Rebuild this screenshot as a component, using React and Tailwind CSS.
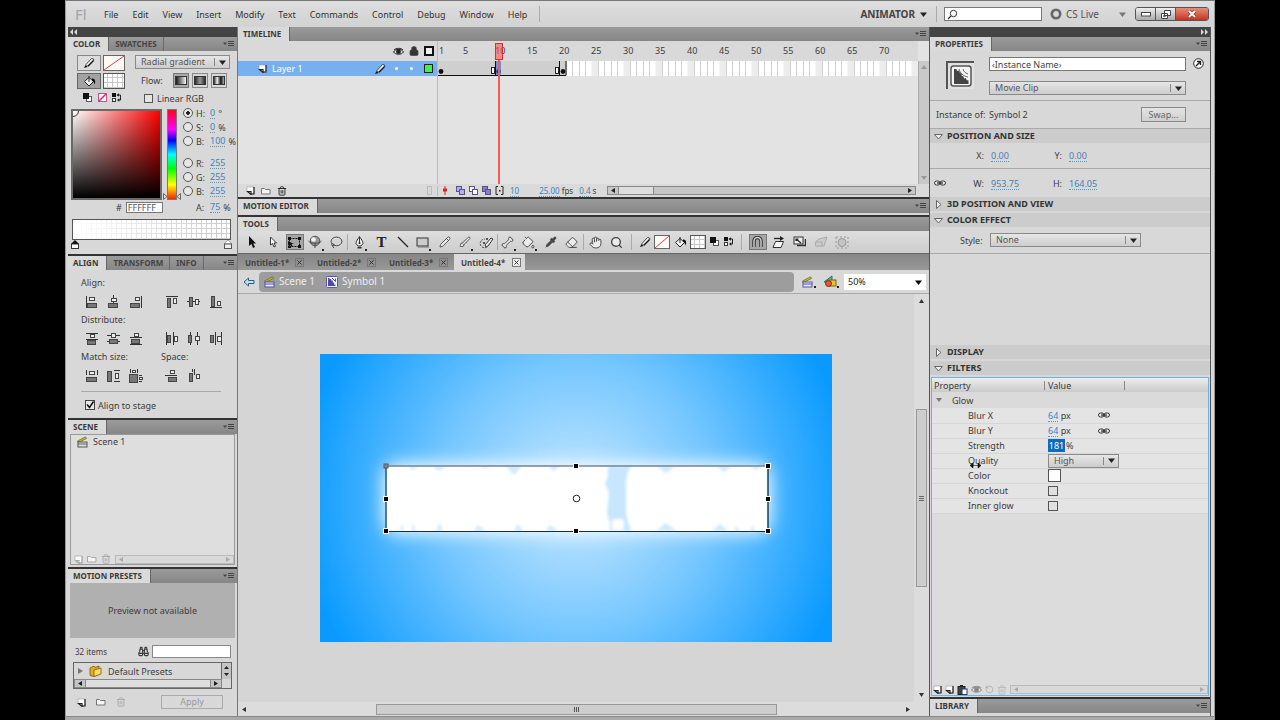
import React from "react";
import { Eraser, Pipette, Bone, Hand, Search, Lasso, PaintBucket, Brush, Pencil, Lock, Trash2, Binoculars, RotateCcw } from "lucide-react";

/* ---------- small drawings ---------- */

function Svg({ w = 14, h = 14, children, className = "" }) {
  return (
    <svg width={w} height={h} viewBox={`0 0 ${w} ${h}`} className={`block shrink-0 ${className}`} fill="none" aria-hidden="true">
      {children}
    </svg>
  );
}

const Down = ({ className = "text-[#222]" }) => (
  <Svg w={7} h={5} className={className}><path d="M0 0.5h7L3.5 5z" fill="currentColor" /></Svg>
);
const MenuGlyph = () => (
  <Svg w={12} h={8}>
    <path d="M0 2.500h4L2 5z" fill="#444" />
    <path d="M5 1.500h6M5 3.500h6M5 5.500h6" stroke="#444" />
  </Svg>
);
const Chevrons = ({ right }) => (
  <Svg w={7} h={6}>
    {right
      ? <path d="M0 0l3 3-3 3zM4 0l3 3-3 3z" fill="#ddd" />
      : <path d="M3 0L0 3l3 3zM7 0L4 3l3 3z" fill="#ddd" />}
  </Svg>
);
const EyeFilled = ({ c = "#222" }) => (
  <Svg w={11} h={9}>
    <path d="M.5 5C2.500 1.500 8.500 1.500 10.500 5 8.500 8 2.500 8 .5 5z" fill="#ddd" stroke={c} />
    <circle cx="5.500" cy="4.700" r="2.400" fill={c} />
    <path d="M1 3C3 .8 8 .8 10 3" stroke={c} />
  </Svg>
);
const Pen = () => (
  <Svg w={12} h={12}>
    <path d="M1 11l1.500-3 2 2z" fill="#111" />
    <path d="M3 7.500L8.500 1.500l2 .5.2 1.500L5 9.500z" fill="#f6f6f6" stroke="#333" strokeWidth=".9" />
    <path d="M5 9L10.500 3.500" stroke="#111" strokeWidth="1.300" />
  </Svg>
);
const Bucket = () => (
  <Svg w={13} h={12}>
    <path d="M1.500 6.500L6 2.500l4.500 4-4.500 4.500z" fill="#f4f4f4" stroke="#222" />
    <path d="M6 7V1" stroke="#222" />
    <path d="M9 3.500c3 0 3.500 2 3 6-1-1-1-3-3-4z" fill="#111" />
  </Svg>
);
const BlackWhite = () => (
  <Svg w={10} h={10}><rect x="3.500" y="3.500" width="5" height="5" fill="#fff" stroke="#555" /><rect x="0" y="0" width="6" height="6" fill="#111" /></Svg>
);
const NoColor = () => (
  <Svg w={9} h={9}><rect x=".5" y=".5" width="8" height="8" fill="#fff" stroke="#c2538c" /><path d="M1 8L8 1" stroke="#d2246e" strokeWidth="1.500" /></Svg>
);
const SwapColors = () => (
  <Svg w={11} h={10}>
    <rect width="4" height="4" fill="#111" /><rect x=".5" y="5.500" width="3" height="3" fill="#fff" stroke="#333" />
    <path d="M5 2h3.500v5H6" stroke="#222" /><path d="M7 .3L4.500 2 7 3.800zM7.300 5.300L5 7l2.300 1.700z" fill="#222" />
  </Svg>
);
const Clapper = ({ light }) => (
  <Svg w={13} h={12}>
    <path d="M1.500 5L9.500 .8l1 1.800-8.500 4z" fill="#c8b828" stroke="#6a6420" strokeWidth=".7" />
    <rect x="2" y="6" width="9" height="5" fill={light ? "#e6e6ff" : "#ddd"} stroke={light ? "#5654a8" : "#555"} />
    <path d="M2 8h9" stroke={light ? "#5654a8" : "#666"} />
  </Svg>
);
const SymbolGlyph = () => (
  <Svg w={12} h={12}>
    <rect x=".5" y=".5" width="11" height="11" rx="1" fill="#f4f4ff" stroke="#5a58b4" />
    <path d="M2 2h1.500v1.300l1.500-.3.5 1.500 1.500.3-.3 1.500 1.500.7L8 8.500l1.500.3V10H2z" fill="#4d4bb0" />
    <path d="M6 2l3.500 3.500M9.500 2.500v3" stroke="#4d4bb0" />
  </Svg>
);
const PageNew = ({ c = "#222" }) => (
  <Svg w={9} h={9}><path d="M1 1h7v7H5L1 5z" fill="#fff" stroke="#999" strokeWidth=".6" /><path d="M8 1v7H4M1.500 5.500H5V8.500z" stroke={c} strokeWidth="1.200" /></Svg>
);
const FolderSmall = ({ c = "#777" }) => (
  <Svg w={10} h={8}><path d="M.5 7V1.500h3l1 1H9V7z" fill="#f4f4f4" stroke={c} /></Svg>
);
const Chain = () => (
  <Svg w={12} h={6}>
    <rect x=".5" y="1" width="5.500" height="4" rx="2" fill="#eee" stroke="#333" />
    <rect x="6" y="1" width="5.500" height="4" rx="2" fill="#eee" stroke="#333" />
    <path d="M3 3h6" stroke="#222" strokeWidth="1.200" />
  </Svg>
);
const Trash = ({ c }) => <Trash2 size={10} color={c} strokeWidth={2.2} />;

const GridSwatch = ({ w, h, id, fade }) => (
  <svg width={fade ? "100%" : w} height={h} className="block" aria-hidden="true">
    <defs>
      <pattern id={id} width="5" height="5" patternUnits="userSpaceOnUse"><path d="M4.500 0V5M0 4.500H5" stroke="#c8c8c8" fill="none" /></pattern>
      <linearGradient id={id + "f"}><stop offset="0" stopColor="#fff" /><stop offset=".9" stopColor="#fff" stopOpacity=".1" /></linearGradient>
    </defs>
    <rect width="100%" height="100%" fill="#fff" /><rect width="100%" height="100%" fill={`url(#${id})`} />
    {fade && <rect width="100%" height="100%" fill={`url(#${id}f)`} />}
    <rect width="100%" height="100%" fill="none" stroke="#555" strokeWidth="2" />
  </svg>
);
const StrokeSwatch = ({ w, h }) => (
  <Svg w={w} h={h}><rect x=".5" y=".5" width={w - 1} height={h - 1} fill="#fdfaf6" stroke="#666" /><path d={`M1 ${h - 1}L${w - 1} 1`} stroke="#d8405a" /></Svg>
);

/* ---------- shared controls ---------- */

const hot = "text-[#3f83bb] border-b border-dotted border-[#5c96c6] leading-[10px]";
const Hot = ({ children, label }) => <button aria-label={label} className={hot}>{children}</button>;

function PanelTabs({ tabs, menu = true }) {
  return (
    <div className="flex h-[14px] shrink-0 items-stretch bg-linear-to-b from-[#9b9b9b] to-[#868686]">
      {tabs.map((t, i) => (
        <button key={t} className={i === 0
          ? "border-r border-[#666] bg-[#dadada] pr-[8px] pl-[5px] text-[8px] leading-[12px] font-bold text-[#3a3a3a]"
          : "border-r border-[#6a6a6a] px-[6px] text-[8px] leading-[12px] font-bold text-[#444]"}>{t}</button>
      ))}
      <span className="flex-1" />
      {menu && <button aria-label="Panel menu" className="pr-[2px]"><MenuGlyph /></button>}
    </div>
  );
}

function Select({ label, value, className = "" }) {
  return (
    <span className={`relative block ${className}`}>
      <select aria-label={label} defaultValue={value} className="block h-[14px] w-full appearance-none border border-[#8a8a8a] bg-linear-to-b from-[#e6e6e6] to-[#cdcdcd] pl-[5px] text-[9px] leading-[12px] text-[#555]">
        <option>{value}</option>
      </select>
      <span className="pointer-events-none absolute inset-y-[3px] right-[4px] flex items-center border-l border-[#888] pl-1"><Down /></span>
    </span>
  );
}

function HScroll({ thumb, faint }) {
  const c = faint ? "#aaa" : "#222";
  return (
    <div className={faint ? "flex h-[9px] min-w-0 flex-1 items-stretch border border-[#bbb] bg-[#d9d9d9]" : "flex h-[9px] min-w-0 flex-1 items-stretch border border-[#888] bg-[#c6c6c6]"}>
      <button aria-label="Scroll left" className="flex w-[10px] items-center justify-center"><Svg w={4} h={5}><path d="M4 0v5L0 2.500z" fill={c} /></Svg></button>
      {thumb && <span className={`border-x border-[#888] bg-[#dedede] ${thumb}`} />}
      <span className="flex-1" />
      <button aria-label="Scroll right" className="flex w-[10px] items-center justify-center"><Svg w={4} h={5}><path d="M0 0v5l4-2.500z" fill={c} /></Svg></button>
    </div>
  );
}

/* ---------- menu bar ---------- */

function MenuBar() {
  return (
    <header className="flex h-[27px] shrink-0 items-center border-t border-[#777] bg-linear-to-b from-[#dedede] to-[#d2d2d2] text-[10px] text-[#333]">
      <span className="w-[38px] pl-[9px] text-[15px] leading-none text-[#a4a4a4]">Fl</span>
      <nav className="flex gap-[14px] text-[9px] whitespace-nowrap">
        {["File", "Edit", "View", "Insert", "Modify", "Text", "Commands", "Control", "Debug", "Window", "Help"].map((m) => <button key={m}>{m}</button>)}
      </nav>
      <span className="ml-3 h-4 w-px bg-[#aaa]" />
      <span className="flex-1" />
      <button className="flex items-center gap-[5px] font-bold text-[#444]">ANIMATOR <Down /></button>
      <span className="mr-[7px] ml-[9px] h-4 w-px bg-[#aaa]" />
      <label className="flex h-[14px] w-[98px] items-center border border-[#777] bg-white px-[2px]">
        <Svg w={11} h={11}><circle cx="6.500" cy="4.500" r="3.200" stroke="#333" /><path d="M4 7L1 10" stroke="#333" strokeWidth="1.300" /></Svg>
        <input aria-label="Search" className="w-full min-w-0 outline-none" />
      </label>
      <button className="ml-2 flex items-center gap-1 text-[#555]">
        <Svg w={12} h={12}><circle cx="6" cy="6" r="4.200" stroke="#666" strokeWidth="2.600" /></Svg>CS Live
        <span className="ml-4"><Down className="text-[#777]" /></span>
      </button>
      <div className="mr-[5px] ml-[9px] flex h-[14px] overflow-hidden rounded-[3px] border border-[#555]">
        <button aria-label="Minimize" className="flex w-5 items-center justify-center border-r border-[#555] bg-linear-to-b from-[#eee] to-[#aaa]"><Svg w={10} h={5}><rect x=".5" y=".5" width="9" height="3.500" fill="#fff" stroke="#444" /></Svg></button>
        <button aria-label="Restore" className="flex w-5 items-center justify-center border-r border-[#555] bg-linear-to-b from-[#eee] to-[#aaa]"><Svg w={10} h={9}><path d="M3.500.5h6v5h-6zM.5 3.500h6v5h-6z" fill="#fff" stroke="#444" /><path d="M2.500 5.500h2v1h-2z" stroke="#444" strokeWidth=".8" /></Svg></button>
        <button aria-label="Close" className="flex w-8 items-center justify-center bg-linear-to-b from-[#e58a78] to-[#c5311c]"><Svg w={10} h={8}><path d="M2 1l6 6M8 1L2 7" stroke="#733" strokeWidth="3.200" /><path d="M2 1l6 6M8 1L2 7" stroke="#fff" strokeWidth="2" /></Svg></button>
      </div>
    </header>
  );
}

/* ---------- left column ---------- */

function Radio({ name, value, unit, checked }) {
  return (
    <div className="flex h-[14px] items-center">
      {checked !== undefined
        ? <input type="radio" name="channel" id={name} defaultChecked={checked} className="size-[10px] appearance-none rounded-full border border-[#555] bg-[#e6e6e6] checked:bg-[radial-gradient(circle,#222_0_2px,#e6e6e6_2px)]" />
        : <span className="w-[10px]" />}
      <label htmlFor={checked !== undefined ? name : undefined} className="w-[17px] pl-[3px]">{name[0]}:</label>
      <Hot label={name}>{value}</Hot>
      <span className="pl-[3px]">{unit}</span>
    </div>
  );
}

const flowIcons = [["#111", "#fff"], ["#222", "#999", "#222"], ["#111", "#eee", "#111", "#ccc"]];

function ColorPanel() {
  return (
    <section className="h-[217px] shrink-0">
      <PanelTabs tabs={["COLOR", "SWATCHES"]} />
      <div className="flex flex-col pt-[4px] pl-[3px]">
        <div className="flex pl-[6px]">
          <div className="flex w-[58px] flex-col gap-[2px]">
            <div className="flex gap-[2px]">
              <button aria-label="Stroke color" className="flex h-[16px] w-6 items-center justify-center border border-[#888] bg-[#dcdcdc]"><Pen /></button>
              <StrokeSwatch w={22} h={16} />
            </div>
            <div className="flex gap-[2px]">
              <button aria-label="Fill color" className="flex h-[16px] w-6 items-center justify-center border border-[#666] bg-[#a2a2a2]"><Bucket /></button>
              <GridSwatch w={22} h={16} id="fill-grid" />
            </div>
            <div className="flex gap-[5px] pt-[2px] pl-[6px]"><BlackWhite /><NoColor /><SwapColors /></div>
          </div>
          <div className="flex flex-1 flex-col gap-[4px]">
            <Select label="Color type" value="Radial gradient" className="w-[95px]" />
            <div className="flex h-[14px] items-center gap-[3px] pl-[6px]"><span className="w-[29px]">Flow:</span>
              {flowIcons.map((cs, i) => (
                <button key={i} aria-label={`Flow ${i + 1}`} className={i ? "border border-[#888] px-px py-[2px]" : "border border-[#777] bg-[#aaa] px-px py-[2px]"}>
                  <Svg w={12} h={9}><defs><linearGradient id={`flow${i}`}>{cs.map((c, j) => <stop key={j} offset={j / (cs.length - 1)} stopColor={c} />)}</linearGradient></defs><rect x=".5" y=".5" width="11" height="8" fill={`url(#flow${i})`} stroke="#333" /></Svg>
                </button>
              ))}
            </div>
            <label className="flex h-[14px] items-center gap-[4px] pl-[9px]"><input type="checkbox" className="size-[9px] appearance-none border border-[#555] bg-[#e4e4e4]" />Linear RGB</label>
          </div>
        </div>
        <div className="mt-[4px] flex">
          <div className="h-[91px] w-[91px] border-2 border-[#6d6868] bg-[linear-gradient(to_top,#000,transparent),linear-gradient(to_right,#fff,#f00)]">
            <Svg w={6} h={6}><path d="M0 5.500A5.500 5.500 0 0 0 5.500 0" stroke="#333" /></Svg>
          </div>
          <div className="flex items-end pl-px"><Svg w={4} h={7}><path d="M.5 .5v6L4 3.500z" fill="#ddd" stroke="#666" /></Svg></div>
          <div className="h-[91px] w-[10px] border border-[#777] bg-[linear-gradient(to_bottom,#f02,#f0f_22%,#00f_34%,#0ff_50%,#0f0_66%,#ff0_84%,#f20)]" />
          <div className="flex w-[6px] items-end"><Svg w={4} h={7}><path d="M3.500 .5v6L0 3.500z" fill="#ddd" stroke="#666" /></Svg></div>
          <div className="-mt-[3px] flex flex-col">
            <Radio name="H" value="0" unit="°" checked={true} />
            <Radio name="S" value="0" unit="%" checked={false} />
            <Radio name="Brightness" value="100" unit="%" checked={false} />
            <span className="h-[8px]" />
            <Radio name="R" value="255" checked={false} />
            <Radio name="G" value="255" checked={false} />
            <Radio name="Blue" value="255" checked={false} />
          </div>
        </div>
        <div className="flex h-[14px] items-center">
          <label className="flex w-[112px] items-center gap-1 pl-[45px]">#<input defaultValue="FFFFFF" className="h-[11px] w-[37px] border border-[#777] bg-white px-px text-[9px] leading-[9px] text-[#555]" /></label>
          <Radio name="A" value="75" unit="%" />
        </div>
        <div className="mt-[5px] mr-[6px] ml-px"><GridSwatch h={21} id="ramp" fade /></div>
        <div className="mr-[5px] flex justify-between">
          <Svg w={8} h={9}><path d="M0 4L4 0l4 4z" fill="#000" /><rect x=".5" y="4" width="7" height="4.500" fill="#fff" stroke="#333" /></Svg>
          <Svg w={8} h={9}><path d="M0 4L4 0l4 4z" fill="#fff" stroke="#777" strokeWidth=".6" /><rect x=".5" y="4" width="7" height="4.500" fill="#eee" stroke="#555" /></Svg>
        </div>
      </div>
    </section>
  );
}

/* each part: x, y, w, h, kind (f filled, o outlined, l line) */
const A = {
  left: [[1, 1, 1, 12, "l"], [4, 2, 5, 3, "o"], [3, 8, 9, 4, "f"]],
  hc: [[6, 0, 1, 13, "l"], [4, 3, 5, 3, "o"], [2, 8, 9, 4, "f"]],
  right: [[12, 1, 1, 12, "l"], [6, 2, 4, 3, "o"], [2, 8, 9, 4, "f"]],
  top: [[1, 1, 12, 1, "l"], [3, 3, 3, 9, "f"], [8, 3, 3, 5, "o"]],
  vc: [[0, 6, 13, 1, "l"], [3, 2, 3, 9, "f"], [8, 4, 3, 5, "o"]],
  bottom: [[1, 12, 12, 1, "l"], [3, 1, 3, 10, "f"], [8, 6, 3, 4, "o"]],
  dTop: [[1, 1, 12, 1, "l"], [5, 2, 4, 3, "o"], [1, 7, 12, 1, "l"], [3, 8, 8, 4, "f"]],
  dMid: [[0, 3, 13, 1, "l"], [4, 1, 4, 4, "o"], [0, 9, 13, 1, "l"], [3, 7, 8, 4, "f"]],
  dBot: [[1, 5, 12, 1, "l"], [5, 1, 4, 3, "o"], [1, 12, 12, 1, "l"], [3, 7, 8, 4, "f"]],
  dLeft: [[1, 0, 1, 13, "l"], [3, 3, 3, 7, "f"], [8, 0, 1, 13, "l"], [9, 4, 3, 5, "o"]],
  dCen: [[3, 0, 1, 13, "l"], [2, 3, 3, 7, "f"], [10, 0, 1, 13, "l"], [8, 4, 4, 4, "o"]],
  dRight: [[6, 0, 1, 13, "l"], [2, 3, 3, 7, "f"], [12, 0, 1, 13, "l"], [8, 4, 4, 5, "o"]],
  mW: [[1, 1, 1, 5, "l"], [12, 1, 1, 5, "l"], [4, 2, 5, 3, "o"], [2, 8, 10, 4, "f"]],
  mH: [[1, 2, 4, 10, "f"], [7, 1, 6, 1, "l"], [7, 12, 6, 1, "l"], [8, 4, 3, 5, "o"]],
  mB: [[1, 0, 1, 4, "l"], [3, 1, 3, 2, "o"], [8, 0, 1, 4, "l"], [1, 5, 8, 8, "f"], [10, 6, 3, 1, "l"], [10, 8, 3, 2, "o"], [10, 12, 3, 1, "l"]],
  sV: [[5, 1, 4, 3, "o"], [0, 6, 3, 1, "l"], [3, 6, 9, 1, "l"], [4, 8, 8, 4, "f"]],
  sH: [[3, 4, 3, 8, "f"], [7, 0, 1, 6, "l"], [5, 0, 1, 3, "l"], [9, 5, 3, 4, "o"]],
};
const AlignBtn = ({ k, label }) => (
  <button aria-label={label} className="flex w-[22px] items-center justify-center">
    <Svg w={14} h={14}>
      {A[k].map(([x, y, w, h, t], i) => t === "o"
        ? <rect key={i} x={x + 0.5} y={y + 0.5} width={w} height={h} fill="#eee" stroke="#444" />
        : t === "f" ? <rect key={i} x={x - 0.5} y={y + 0.5} width={w} height={h} fill="#777" stroke="#444" />
          : <rect key={i} x={x} y={y} width={w} height={h} fill="#333" />)}
    </Svg>
  </button>
);

function AlignPanel() {
  const line = (a, b) => (
    <div className="flex h-[19px] items-stretch">
      {a.map((k) => <AlignBtn key={k} k={k} label={k} />)}
      <span className="w-[14px]" />
      {b.map((k) => <AlignBtn key={k} k={k} label={k} />)}
    </div>
  );
  return (
    <section className="h-[162px] shrink-0">
      <PanelTabs tabs={["ALIGN", "TRANSFORM", "INFO"]} />
      <div className="flex flex-col pt-1 pl-[13px]">
        <div className="h-[18px] leading-[18px]">Align:</div>
        {line(["left", "hc", "right"], ["top", "vc", "bottom"])}
        <div className="h-[18px] leading-[18px]">Distribute:</div>
        {line(["dTop", "dMid", "dBot"], ["dLeft", "dCen", "dRight"])}
        <div className="flex h-[18px] leading-[18px]"><span className="w-[80px]">Match size:</span><span>Space:</span></div>
        {line(["mW", "mH", "mB"], ["sV", "sH"])}
        <hr className="mt-[6px] mr-4 border-[#aaa]" />
        <label className="mt-[6px] flex h-[14px] items-center gap-[3px] pl-1">
          <span className="relative block size-[10px]">
            <input type="checkbox" defaultChecked className="block size-[10px] appearance-none border border-[#444] bg-[#e8e8e8]" />
            <Svg w={10} h={10} className="pointer-events-none absolute inset-0"><path d="M2 4.500l2.500 3L8.500 1.500" stroke="#111" strokeWidth="1.500" /></Svg>
          </span>
          Align to stage
        </label>
      </div>
    </section>
  );
}

function ScenePanel() {
  return (
    <section className="flex min-h-[145px] flex-1 flex-col">
      <PanelTabs tabs={["SCENE"]} />
      <div className="mx-[2px] mb-[2px] flex flex-1 flex-col border border-[#999] bg-[#dedede]">
        <div className="flex items-center gap-[4px] pl-[5px] leading-[13px]"><Clapper /><span>Scene 1</span></div>
        <span className="flex-1" />
        <div className="flex items-center gap-[4px] pl-[3px]"><PageNew c="#aaa" /><FolderSmall c="#aaa" /><Trash c="#aaa" /><HScroll faint /></div>
      </div>
    </section>
  );
}

function PresetsPanel() {
  return (
    <section className="h-[147px] shrink-0">
      <PanelTabs tabs={["MOTION PRESETS"]} />
      <div className="mx-[2px] flex h-[55px] items-center justify-center bg-[#b0b0b0]">Preview not available</div>
      <div className="mt-[7px] mr-[6px] flex h-[13px] items-center pl-[7px] text-[8px]">
        <span className="w-[63px]">32 items</span><Binoculars size={11} strokeWidth={2.4} />
        <input aria-label="Search presets" className="ml-[3px] h-[13px] min-w-0 flex-1 border border-[#888] bg-white" />
      </div>
      <div className="mt-[4px] mr-[5px] ml-[5px] border border-[#666]">
        <div className="flex h-[16px] overflow-hidden">
          <div className="flex flex-1 items-center gap-[6px] pl-1">
            <Svg w={5} h={6}><path d="M0 0v6l5-3z" fill="#777" /></Svg>
            <Svg w={13} h={12}><path d="M1 3l4-2 1 1.500 4-1.500V9l-5 2.500-4-1z" fill="#e8ab1e" stroke="#7a5512" strokeWidth=".8" /><path d="M5 5l7-2v6l-7 2.500z" fill="#ffdf60" stroke="#7a5512" strokeWidth=".8" /></Svg>
            <span>Default Presets</span>
          </div>
          <div className="flex w-[10px] flex-col items-center justify-between border-l border-[#666] bg-[#c4c4c4] py-[3px]">
            <Svg w={5} h={3}><path d="M0 3h5L2.500 0z" fill="#222" /></Svg><Svg w={5} h={3}><path d="M0 0h5L2.500 3z" fill="#222" /></Svg>
          </div>
        </div>
        <div className="flex pr-[9px]"><HScroll thumb="w-[128px]" /></div>
      </div>
      <div className="mt-[6px] flex h-[14px] items-center gap-[10px] pl-[9px]">
        <PageNew /><FolderSmall /><Trash c="#aaa" />
        <button className="mr-[14px] ml-auto h-[14px] w-[62px] border border-[#aaa] text-[9px] leading-[12px] text-[#9a9a9a]">Apply</button>
      </div>
    </section>
  );
}

/* ---------- timeline ---------- */

const F = 6.4;
const frames = Array.from({ length: 75 }, (_, i) => i + 1);

function Timeline() {
  return (
    <section className="flex h-[170px] shrink-0 flex-col bg-[#e3e3e3]">
      <PanelTabs tabs={["TIMELINE"]} />
      <div className="relative flex min-h-0 flex-1">
        <div className="flex w-[200px] shrink-0 flex-col border-r border-[#bbb]">
          <div className="flex h-[20px] items-center justify-end gap-[5px] bg-[#d9d9d9] pr-[3px]">
            <EyeFilled /><Lock size={10} strokeWidth={3} fill="#333" />
            <Svg w={10} h={10}><rect x="1" y="1" width="8" height="8" fill="#eee" stroke="#111" strokeWidth="2" /></Svg>
          </div>
          <div className="flex h-[15px] items-center bg-[#76b0ee] pr-[4px] pl-[20px] text-white">
            <PageNew /><span className="flex-1 pl-[5px] leading-[12px]">Layer 1</span>
            <Pen />
            <span className="ml-[9px] size-[3px] rounded-full bg-white" /><span className="mr-[11px] ml-[12px] size-[3px] rounded-full bg-white" />
            <span className="size-[9px] border border-[#222] bg-[#4dec55]" />
          </div>
        </div>
        <div className="min-w-0 flex-1 overflow-hidden">
          <div className="flex h-[20px] bg-[#d9d9d9] pt-[3px] pl-px text-[9px]">
            <span className="w-[24px] shrink-0">1</span>
            {[5, 10, 15, 20, 25, 30, 35, 40, 45, 50, 55, 60, 65, 70].map((n) => <span key={n} className="w-8 shrink-0">{n}</span>)}
          </div>
          <svg width="100%" height="15" className="block" aria-hidden="true">
            <rect width="100%" height="15" fill="#fff" />
            {frames.map((n) => (
              <g key={n}>
                {n % 5 === 0 && <rect x={(n - 1) * F} width={F} height="15" fill="#ececec" />}
                <path d={`M${Math.round(n * F) + 0.5} 0V15`} stroke="#cfcfcf" />
              </g>
            ))}
            <rect width="128" height="14" fill="#cfcfcf" />
            <path d="M0 14.500H128M57.500 0V14M121.500 0V14M128 0V14" stroke="#111" />
            <rect x="58" width="5" height="14" fill="#6b93e0" />
            <rect x="53.500" y="6.500" width="3" height="6" fill="#fff" stroke="#222" /><rect x="117.500" y="6.500" width="3" height="6" fill="#fff" stroke="#222" />
            <circle cx="3" cy="10.500" r="2.400" fill="#111" /><circle cx="60.500" cy="10.500" r="2.200" fill="#223a80" /><circle cx="125" cy="10.500" r="2.400" fill="#111" />
          </svg>
        </div>
        <div className="mt-[20px] flex w-[11px] shrink-0 flex-col items-center justify-between border-l border-[#aaa] bg-[#c9c9c9] py-1">
          <Svg w={6} h={4}><path d="M0 4h6L3 0z" fill="#999" /></Svg><Svg w={6} h={4}><path d="M0 0h6L3 4z" fill="#999" /></Svg>
        </div>
        <div className="absolute top-[2px] bottom-0 left-[257px] flex w-[8px] flex-col items-center">
          <span className="h-[17px] w-[8px] border border-[#c33] bg-[#f55]/60" />
          <span className="w-[2px] flex-1 bg-[#e8605c]" />
        </div>
      </div>
      <div className="flex h-[13px] shrink-0 items-center bg-[#dadada] text-[8px]">
        <div className="flex w-[200px] items-center gap-[6px] border-r border-[#bbb] pl-[8px]"><PageNew /><FolderSmall /><Trash c="#222" /><span className="mr-[5px] ml-auto h-[9px] w-[5px] border border-[#bbb]" /></div>
        <div className="flex w-[169px] items-center gap-[4px] pl-[5px]">
          <Svg w={4} h={9}><path d="M2 0v9M0 3h4v2H0z" stroke="#d22" fill="#d22" /></Svg>
          <span className="w-px" />
          {["#b9aee0", "#fff", "#8a7cc4"].map((c) => <Svg key={c} w={9} h={9}><rect x=".5" y=".5" width="5" height="5" fill={c} stroke="#57508c" /><rect x="3.500" y="3.500" width="5" height="5" fill={c} stroke="#57508c" /></Svg>)}
          <Svg w={9} h={9}><path d="M3 .5H1v8h2M6 .5h2v8H6" stroke="#222" /><rect x="4" y="4" width="1.500" height="1.500" fill="#222" /></Svg>
          <span className="pr-[16px] pl-[2px]"><Hot label="Current frame">10</Hot></span>
          <span className="whitespace-nowrap"><Hot label="Frame rate">25.00</Hot> fps</span>
          <span className="pl-[2px] whitespace-nowrap"><Hot label="Elapsed">0.4</Hot> s</span>
        </div>
        <HScroll thumb="w-[36px]" /><span className="w-[13px]" />
      </div>
    </section>
  );
}

/* ---------- tools ---------- */

const L = { size: 13, strokeWidth: 1.8, color: "#444", fill: "#ececec" };
const Tool = ({ label, on, corner, w = "w-[21px]", children }) => (
  <button aria-label={label} className={`flex h-[18px] shrink-0 items-center justify-center ${w}`}>
    <span className={on ? "flex h-[16px] w-[18px] items-center justify-center border border-[#777] bg-[#a6a6a6]" : "flex"}>{children}</span>
    {corner && <span className="size-[2px] self-end bg-[#222]" />}
  </button>
);
const Sep = ({ m = "mx-px" }) => <span className={`h-[16px] w-px shrink-0 bg-[#aaa] ${m}`} />;

function Tools() {
  return (
    <section className="shrink-0">
      <PanelTabs tabs={["TOOLS"]} menu={false} />
      <div className="flex h-[22px] items-center bg-linear-to-b from-[#dedede] to-[#cdcdcd] pl-[4px]">
        <Tool label="Selection"><Svg w={9} h={12}><path d="M1 0v10l2.500-2 1.500 4 2-1-1.800-3.500H8z" fill="#111" /></Svg></Tool>
        <Tool label="Subselection"><Svg w={9} h={12}><path d="M1.500 1v8l2-1.500 1.500 3.500 1.500-.7L5 7h2.500z" fill="#fff" stroke="#222" strokeWidth=".9" /></Svg></Tool>
        <Tool label="Free transform" on>
          <Svg w={15} h={13}>
            <rect x="2.500" y="2.500" width="10" height="8" stroke="#111" strokeDasharray="2 1" />
            <path d="M1 1h3v3H1zM11 1h3v3h-3zM1 9h3v3H1zM11 9h3v3h-3zM1 5v5l2-1.500 1 2 1.500-.8L4.500 8H7z" fill="#111" />
          </Svg>
        </Tool>
        <Tool label="3D rotation" corner>
          <Svg w={14} h={14}>
            <circle cx="7" cy="6" r="4.800" fill="#9a9a9a" stroke="#555" />
            <circle cx="5.500" cy="4.500" r="2.300" fill="#f2f2f2" />
            <path d="M.5 6c2 3 11 3 13 0M7 9v4" stroke="#444" />
          </Svg>
        </Tool>
        <Tool label="Lasso"><Lasso {...L} fill="none" /></Tool>
        <Sep m="mr-[2px]" />
        <Tool label="Pen" corner>
          <Svg w={11} h={13}><path d="M5.500 .5C4 3 2 5 2 7.500L4 10h3l2-2.500C9 5 7 3 5.500 .5z" fill="#f2f2f2" stroke="#333" /><path d="M5.500 1v6" stroke="#333" /><circle cx="5.500" cy="7" r="1" fill="#222" /><path d="M3.500 11h4v1.500h-4z" fill="#333" /></Svg>
        </Tool>
        <Tool label="Text"><span className="font-['Liberation_Serif',serif] text-[15px] leading-none font-bold text-[#222]">T</span></Tool>
        <Tool label="Line"><Svg w={12} h={12}><path d="M1 1l10 10" stroke="#222" strokeWidth="1.300" /></Svg></Tool>
        <Tool label="Rectangle" corner><Svg w={13} h={11}><rect x="1" y="1" width="11" height="8" fill="#ccc" stroke="#333" /><path d="M2 10h11V2" stroke="#777" /></Svg></Tool>
        <Tool label="Pencil"><Pencil {...L} size={12} /></Tool>
        <Tool label="Brush" corner><Brush {...L} size={12} /></Tool>
        <Tool label="Deco">
          <Svg w={15} h={13}>
            <path d="M6 9l6-7 2 1-5 7-2 1z" fill="#eee" stroke="#333" />
            <path d="M2 10c-2-3 0-7 4-7M3 11c2 1 4 1 5 0" stroke="#555" strokeDasharray="2 1" />
            <path d="M4 6h2v2H4zM7 2h2v2H7z" fill="#555" />
          </Svg>
        </Tool>
        <Sep m="" />
        <Tool label="Bone" corner><Bone {...L} /></Tool>
        <Tool label="Paint bucket" corner><PaintBucket {...L} /></Tool>
        <Tool label="Eyedropper"><Pipette {...L} fill="#444" size={12} /></Tool>
        <Tool label="Eraser"><Eraser {...L} /></Tool>
        <Sep m="mx-px" />
        <Tool label="Hand"><Hand {...L} /></Tool>
        <Tool label="Zoom"><Search {...L} strokeWidth={2.5} /></Tool>
        <Sep m="mx-[4px]" />
        <Tool label="Stroke" w="w-[18px]"><Pen /></Tool>
        <StrokeSwatch w={16} h={14} />
        <Tool label="Fill" w="w-[20px]"><Bucket /></Tool>
        <GridSwatch w={16} h={14} id="tool-grid" />
        <Tool label="Black and white" w="w-[17px]"><BlackWhite /></Tool>
        <Tool label="Swap colors" w="w-[12px]"><SwapColors /></Tool>
        <Sep m="mr-[5px] ml-[6px]" />
        <Tool label="Snap" on><Svg w={11} h={12}><path d="M2 11V5a3.500 3.500 0 0 1 7 0v6" stroke="#333" strokeWidth="3.500" /><path d="M2 11V5a3.500 3.500 0 0 1 7 0v6" stroke="#ccc" strokeWidth="1.500" /></Svg></Tool>
        <Tool label="Rotate"><Svg w={13} h={13}><path d="M3.500 5.500h8l-2.500 6H1z" fill="#fff" stroke="#333" /><path d="M2 2.500h7" stroke="#222" strokeWidth="1.300" /><path d="M8 0l4 2.500L8 5z" fill="#222" /></Svg></Tool>
        <Tool label="Scale"><Svg w={13} h={12}><path d="M4 9.500h8.500V3" stroke="#333" strokeWidth="1.500" /><rect x="1" y="1" width="9" height="7" fill="#eee" stroke="#333" /><path d="M3 3l5 4M3 5V3h2.500" stroke="#222" strokeWidth="1.200" /></Svg></Tool>
        <Tool label="Distort"><Svg w={14} h={12}><path d="M5 3l8-2-3 9H7L1.500 10V6z" fill="#ccc" stroke="#aaa" /><path d="M1.500 6H8v4" stroke="#aaa" /></Svg></Tool>
        <Tool label="Envelope"><Svg w={14} h={13}><circle cx="7" cy="6.500" r="4" fill="#c4c4c4" stroke="#999" /><rect x="1" y="1" width="12" height="11" stroke="#999" strokeDasharray="2 2" /></Svg></Tool>
      </div>
    </section>
  );
}

/* ---------- document ---------- */

function DocumentTabs() {
  return (
    <div className="flex h-[17px] shrink-0 border-t border-[#666] bg-linear-to-b from-[#868686] to-[#989898]">
      {[1, 2, 3, 4].map((n) => (
        <div key={n} className={n === 4 ? "flex w-[71px] items-center justify-between bg-[#dadada] pr-[4px] pl-[7px] text-[8px] font-bold text-[#444]" : "flex w-[72px] items-center justify-between pr-[6px] pl-[7px] text-[8px] font-bold text-[#444]"}>
          <button className="whitespace-nowrap">{`Untitled-${n}*`}</button>
          <button aria-label={`Close Untitled-${n}`}><Svg w={9} h={9}><rect x=".5" y=".5" width="8" height="8" stroke="#777" fill={n === 4 ? "#eee" : "none"} /><path d="M2.500 2.500l4 4M6.500 2.500l-4 4" stroke="#333" /></Svg></button>
        </div>
      ))}
    </div>
  );
}

function EditBar() {
  return (
    <div className="flex h-[23px] shrink-0 items-center bg-[#d8d8d8]">
      <button aria-label="Back" className="flex w-[21px] justify-center"><Svg w={12} h={10}><path d="M1 5l4.500-4v2.500H11v3H5.500V9z" fill="#b9e2f4" stroke="#2c5e86" /></Svg></button>
      <div className="flex h-[20px] flex-1 items-center rounded-sm bg-[#9d9d9d] pl-[4px] text-[10px] text-[#eee]">
        <button className="flex items-center gap-[3px]"><Clapper light />Scene 1</button>
        <button className="ml-[11px] flex items-center gap-[4px]"><SymbolGlyph />Symbol 1</button>
      </div>
      <button aria-label="Edit scene" className="ml-[7px] flex items-end"><Clapper light /><span className="size-[2px] bg-[#222]" /></button>
      <button aria-label="Edit symbols" className="ml-[7px] flex items-end">
        <Svg w={14} h={13}><path d="M1 7l8-6v6z" fill="#4fc29a" stroke="#24705c" /><rect x="6" y="5" width="7" height="6" fill="#e6c52e" stroke="#7a6512" /><circle cx="5.500" cy="8.500" r="3" fill="#e2592e" stroke="#8a2b12" /></Svg>
        <span className="size-[2px] bg-[#222]" />
      </button>
      <span className="relative ml-[5px] block">
        <select aria-label="Zoom" defaultValue="50%" className="block h-[16px] w-[82px] appearance-none bg-white pl-[4px] text-[9px] leading-[15px] text-[#222]"><option>50%</option></select>
        <Down className="pointer-events-none absolute top-[6px] right-[4px] text-black" />
      </span>
      <span className="w-[3px]" />
    </div>
  );
}

const handles = [[256, 112], [448, 112], [66, 145], [448, 145], [66, 177], [256, 177], [448, 177]];

function Stage() {
  return (
    <svg width="512" height="288" viewBox="0 0 512 288" className="block shrink-0" role="img" aria-label="Stage">
      <defs>
        <radialGradient id="sky" gradientUnits="userSpaceOnUse" cx="256" cy="144" r="276">
          <stop offset="0" stopColor="#c8e8ff" /><stop offset=".5" stopColor="#74c6ff" /><stop offset="1" stopColor="#0a9aff" />
        </radialGradient>
        <filter id="soft" x="-20%" y="-60%" width="140%" height="220%"><feGaussianBlur stdDeviation="9" /></filter>
        <filter id="tiny"><feGaussianBlur stdDeviation="1.800" /></filter>
      </defs>
      <rect width="512" height="288" fill="url(#sky)" />
      <rect x="64" y="110" width="386" height="69" rx="12" fill="#fff" filter="url(#soft)" />
      <rect x="66" y="112" width="382" height="65" fill="#fff" />
      <g filter="url(#tiny)">
        <path d="M288 112h24c-5 5-6 12-6 22v20c0 10 2 16 6 23h-22v-8l-3-10 2-20-4-10 3-6z" fill="#c8e6fd" />
        <rect x="292" y="165" width="12" height="11" rx="3" fill="#fff" />
        <g fill="#cfe9fc">
          <path d="M87 112h12l-6 4zM112 112h14l-7 5zM160 112h8l-2 3zM186 112h16l-8 9zM228 112h12l-6 5zM336 112h20l-10 7zM396 112h16l-8 6zM430 112h12l-6 4z" />
          <path d="M81 177v-9l3 9zM92 177v-8l4 8zM116 177l4-8 3 8zM154 177l4-6 8 6zM194 177l4-7 5 7zM226 177l4-6 8 6zM336 177l10-8 10 8zM392 177l8-7 8 7zM414 177l3-5 3 5zM430 177l3-6 2 6z" />
        </g>
      </g>
      <path d="M66 112H448" stroke="#74828c" strokeWidth="1.500" />
      <path d="M66 112V177" stroke="#1c6190" strokeWidth="1.600" />
      <path d="M448 112V177" stroke="#143044" strokeWidth="1.400" />
      <path d="M448 177.500H66" stroke="#143044" />
      {handles.map(([x, y]) => <rect key={`${x}-${y}`} x={x - 2.5} y={y - 2.5} width="5" height="5" fill="#000" stroke="#fff" strokeWidth="1" />)}
      <rect x="64" y="110" width="4" height="4" fill="#889" stroke="#555" />
      <circle cx="256.500" cy="144.500" r="3.300" fill="#fff" stroke="#222" />
    </svg>
  );
}

function Canvas() {
  return (
    <section className="flex min-h-0 flex-1 flex-col border-t border-[#aaa]">
      <div className="flex min-h-0 flex-1">
        <div className="flex min-w-0 flex-1 items-center justify-center overflow-hidden bg-[#d5d5d5]"><Stage /></div>
        <div className="flex w-[15px] shrink-0 flex-col items-center bg-[#dcdcdc]">
          <span className="pt-[5px]"><Svg w={5} h={4}><path d="M0 4h5L2.500 0z" fill="#333" /></Svg></span>
          <span className="flex-1" />
          <span className="flex h-[178px] w-[11px] items-center justify-center border border-[#999] bg-[#cdcdcd]"><Svg w={5} h={5}><path d="M0 .5h5M0 2.500h5M0 4.500h5" stroke="#666" /></Svg></span>
          <span className="flex-1" />
          <span className="pb-[5px]"><Svg w={5} h={4}><path d="M0 0h5L2.500 4z" fill="#333" /></Svg></span>
        </div>
      </div>
      <div className="flex h-[14px] shrink-0 items-center bg-[#dcdcdc] pr-[19px] pl-[4px]">
        <Svg w={4} h={5}><path d="M4 0v5L0 2.500z" fill="#333" /></Svg>
        <span className="flex-1" />
        <span className="flex h-[11px] w-[401px] items-center justify-center border border-[#999] bg-[#cdcdcd]"><Svg w={5} h={5}><path d="M.5 0v5M2.500 0v5M4.500 0v5" stroke="#555" /></Svg></span>
        <span className="flex-1" />
        <Svg w={4} h={5}><path d="M0 0v5l4-2.500z" fill="#333" /></Svg>
      </div>
    </section>
  );
}

/* ---------- properties ---------- */

const SectionHead = ({ open, children, className = "" }) => (
  <button className={`flex h-[14px] w-full shrink-0 items-center gap-[4px] bg-[#cccccc] pl-[4px] text-[9px] leading-[12px] font-bold text-[#333] ${className}`}>
    <Svg w={9} h={9}>{open ? <path d="M.5 2.500h8L4.500 7z" fill="#eee" stroke="#666" /> : <path d="M2.500 .5v8L7 4.500z" fill="#eee" stroke="#666" />}</Svg>
    {children}
  </button>
);
const Pair = ({ a, av, b, bv }) => (
  <>
    <span className="w-[26px] text-right">{a}:</span><span className="w-[50px] pl-[7px]"><Hot label={a}>{av}</Hot></span>
    <span className="w-[28px] text-right">{b}:</span><span className="pl-[7px]"><Hot label={b}>{bv}</Hot></span>
  </>
);

function FilterRow({ name, children }) {
  return (
    <tr className="h-[15px] border-b border-[#d6d6d6]">
      <th scope="row" className="p-0 pl-[36px] text-left font-normal">{name}</th>
      <td colSpan="3" className="p-0 pl-[4px]"><div className="flex h-[14px] items-center gap-px">{children}</div></td>
    </tr>
  );
}

function Properties() {
  return (
    <aside className="flex w-[282px] shrink-0 flex-col border-x border-[#555] bg-[#d8d8d8]">
      <div className="flex h-[10px] shrink-0 items-center justify-end bg-[#444] pr-[2px]"><Chevrons right /></div>
      <PanelTabs tabs={["PROPERTIES"]} />
      <div className="flex h-[50px] shrink-0 border-b border-[#aaa] pt-[6px]">
        <div className="mt-[4px] mr-[15px] ml-[16px] flex size-[28px] items-center justify-center border-t-2 border-l-2 border-[#555] bg-[#e2e2e2]">
          <Svg w={22} h={22}>
            <rect x="1" y="1" width="20" height="20" rx="2.500" fill="#f4f4f4" stroke="#555" strokeWidth="1.500" />
            <path d="M4 4h2.500l.5 2 2-.5 1 2.500 2 .5-.5 2 2 1 .5 2 2-.5.5 2 2 .5V19H4z" fill="#444" />
            <path d="M9 4c1 4 4 7 9 8M13 4c.5 2.500 2 4 5 5" stroke="#666" />
          </Svg>
        </div>
        <div className="flex flex-1 flex-col gap-[10px]">
          <input aria-label="Instance name" defaultValue="‹Instance Name›" className="h-[14px] w-full border border-[#777] bg-white pl-[2px] text-[9px] leading-[12px] text-[#444]" />
          <Select label="Symbol behavior" value="Movie Clip" className="w-full" />
        </div>
        <span className="mt-px mr-[6px] ml-[7px]"><Svg w={11} h={11}><circle cx="5.500" cy="5.500" r="4.800" fill="#fff" stroke="#222" /><path d="M3 8l4-4M4 3.500h3.500V7" stroke="#222" strokeWidth="1.400" /></Svg></span>
      </div>
      <div className="flex h-[28px] shrink-0 items-center border-b border-[#aaa] pr-[24px] pl-[6px]">
        <span className="w-[53px] whitespace-nowrap">Instance of:</span><span className="flex-1">Symbol 2</span>
        <button className="h-[15px] w-[45px] border border-[#8a8a8a] bg-linear-to-b from-[#e4e4e4] to-[#cfcfcf] text-[9px] leading-[13px] text-[#666]">Swap...</button>
      </div>
      <SectionHead open>POSITION AND SIZE</SectionHead>
      <div className="flex h-[26px] shrink-0 items-center border-b border-[#aaa] pl-[28px]"><Pair a="X" av="0.00" b="Y" bv="0.00" /></div>
      <div className="flex h-[28px] shrink-0 items-center"><span className="w-[28px] pl-[4px]"><Chain /></span><Pair a="W" av="953.75" b="H" bv="164.05" /></div>
      <SectionHead>3D POSITION AND VIEW</SectionHead>
      <SectionHead open className="mt-[2px]">COLOR EFFECT</SectionHead>
      <div className="flex h-[27px] shrink-0 items-center border-b border-[#aaa] pl-[30px]"><span className="w-[30px]">Style:</span><Select label="Color style" value="None" className="w-[151px]" /></div>
      <div className="h-[91px] shrink-0" />
      <SectionHead>DISPLAY</SectionHead>
      <SectionHead open className="mt-[2px]">FILTERS</SectionHead>
      <div className="mx-px mt-[2px] mb-px flex min-h-0 flex-1 flex-col border border-[#6fb1e0] bg-[#dcdcdc]">
        <table className="w-full table-fixed border-collapse bg-[#e4e4e4] text-left">
          <colgroup><col className="w-[112px]" /><col className="w-[56px]" /><col className="w-[25px]" /><col /></colgroup>
          <thead>
            <tr className="h-[14px] bg-linear-to-b from-[#eee] to-[#cacaca]">
              <th className="p-0 pl-[2px] font-normal">Property</th>
              <th colSpan="2" className="p-0 font-normal"><span className="block border-x border-[#888] pl-[3px] leading-[9px]">Value</span></th>
              <th className="p-0" aria-label="Options" />
            </tr>
          </thead>
          <tbody>
            <tr className="h-[16px] bg-[#dadada]"><th scope="row" colSpan="4" className="p-0 pl-[4px] font-normal"><span className="flex items-center gap-[10px]"><Svg w={6} h={4}><path d="M0 0h6L3 4z" fill="#777" /></Svg>Glow</span></th></tr>
            {["X", "Y"].map((a) => (
              <FilterRow key={a} name={`Blur ${a}`}><span className="w-[49px]"><Hot label={`Blur ${a}`}>64</Hot> px</span><Chain /></FilterRow>
            ))}
            <FilterRow name="Strength"><input aria-label="Strength" defaultValue="181" className="h-[13px] w-[17px] bg-[#0a6cc0] text-center text-[9px] leading-[12px] text-white" /><span>%</span></FilterRow>
            <tr className="h-[15px] border-b border-[#d6d6d6]">
              <th scope="row" className="p-0 pl-[36px] font-normal">
                <span className="relative block">Quality
                  <Svg w={11} h={5} className="absolute top-[9px] left-[2px]"><path d="M3 2.500h5M3 0L0 2.500 3 5zM8 0l3 2.500L8 5z" fill="#111" stroke="#111" strokeWidth=".6" /></Svg>
                </span>
              </th>
              <td colSpan="3" className="p-0 pl-[4px]"><Select label="Quality" value="High" className="w-[71px]" /></td>
            </tr>
            <FilterRow name="Color"><button aria-label="Glow color" className="size-[13px] border border-[#555] bg-white" /></FilterRow>
            <FilterRow name="Knockout"><input aria-label="Knockout" type="checkbox" className="size-[10px] appearance-none border border-[#555] bg-[#e0e0e0]" /></FilterRow>
            <FilterRow name="Inner glow"><input aria-label="Inner glow" type="checkbox" className="size-[10px] appearance-none border border-[#555] bg-[#e0e0e0]" /></FilterRow>
          </tbody>
        </table>
        <span className="flex-1" />
        <div className="flex h-[11px] shrink-0 items-center gap-[3px] pl-px">
          <PageNew /><PageNew />
          <Svg w={11} h={10}><rect x="1" y="1.500" width="7" height="8" fill="#444" stroke="#222" /><rect x="3" y="0" width="3" height="2" fill="#222" /><rect x="5" y="4" width="5" height="5.500" fill="#fff" stroke="#223a6a" /></Svg>
          <EyeFilled c="#888" /><RotateCcw size={9} color="#aaa" /><Trash c="#bbb" />
          <HScroll faint />
        </div>
      </div>
      <div className="h-[2px] shrink-0 bg-[#333]" />
      <PanelTabs tabs={["LIBRARY"]} />
      <div className="h-[3px] shrink-0" />
    </aside>
  );
}

const Rule = () => <div className="h-[2px] shrink-0 bg-[#333]" />;

export default function App() {
  return (
    <div className="flex h-screen min-h-[720px] flex-col bg-black px-[65px] font-['Noto_Sans','Open_Sans',sans-serif] text-[9px] leading-[13px] text-[#3c3c3c]">
      <div className="flex min-h-0 flex-1 flex-col border-x border-[#999] bg-[#d8d8d8]">
        <MenuBar />
        <main className="flex min-h-0 flex-1 pr-[3px] pl-[2px]">
          <div className="flex w-[170px] shrink-0 flex-col border-r border-[#777]">
            <div className="flex h-[10px] shrink-0 items-center bg-[#444] pl-[2px]"><Chevrons /></div>
            <ColorPanel /><Rule /><AlignPanel /><Rule /><ScenePanel /><Rule /><PresetsPanel />
          </div>
          <div className="flex min-w-0 flex-1 flex-col">
            <Timeline /><Rule />
            <PanelTabs tabs={["MOTION EDITOR"]} />
            <div className="h-[2px] shrink-0" /><Rule />
            <Tools /><DocumentTabs /><EditBar /><Canvas />
          </div>
          <Properties />
        </main>
        <div className="h-[4px] shrink-0 border-t border-[#888] bg-[#aaa]" />
      </div>
    </div>
  );
}
